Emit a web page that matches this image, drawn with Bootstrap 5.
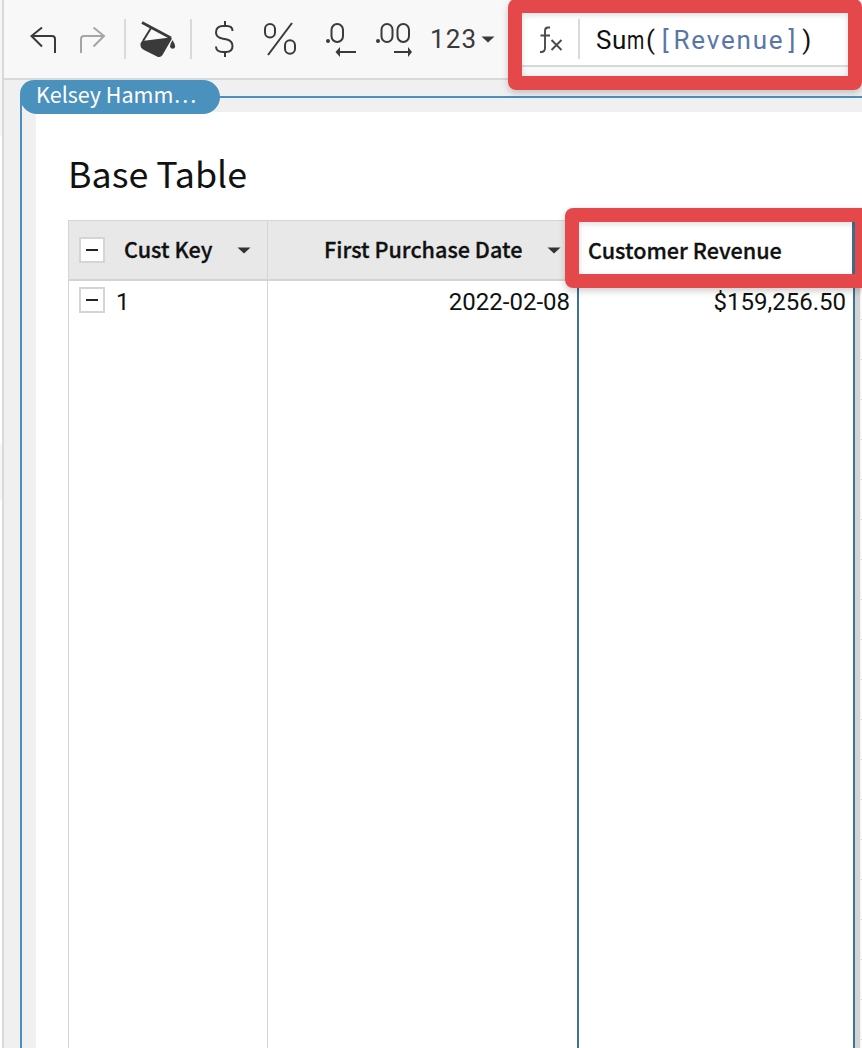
<!DOCTYPE html>
<html lang="en">
<head>
<meta charset="utf-8">
<meta name="viewport" content="width=device-width, initial-scale=1">
<title>Base Table</title>
<link href="https://cdn.jsdelivr.net/npm/bootstrap@5.3.0/dist/css/bootstrap.min.css" rel="stylesheet">
<style>
body{font-family:"Noto Sans CJK SC","Open Sans",sans-serif;color:#111;background:#fff;height:1048px;overflow:hidden}
.app{height:1048px;border-left:2px solid #d9d9d9;margin-left:2px;background:#f0f0f0}
.toolbar{height:80px;background:#f8f8f8;border-bottom:2px solid #d9d9d9}
.toolbar svg,.caret{display:block;flex:none}
.rule{width:2px;height:40px;background:#d9d9d9;flex:none}
.num{font:400 26px/30px Roboto,sans-serif;letter-spacing:1.2px;color:#3a3a3a}
.formula{width:327px;height:54px;margin-left:27px;margin-top:13px;align-self:flex-start;background:#fff;border-bottom:2px solid #d9d9d9}
.code{font:400 26px/30px Roboto,sans-serif;letter-spacing:1.8px;white-space:nowrap;padding-top:2px}
.code .fn{letter-spacing:.5px}
.code .m{display:inline-block;transform:scaleX(.76);transform-origin:0 50%;margin-right:-4px}
.code .ref{color:#5877a8;margin-left:5px}
.code .br{margin-right:3px}
.page{height:968px;padding-left:16px}
.selection{position:relative;height:952px;width:842px;margin-top:16px;border-top:2px solid #4b91bd;border-left:2px solid #4b91bd}
.owner{position:absolute;left:-2px;top:-18px;width:200px;height:34px;background:#4b91bd;color:#fff;border-radius:14px 17px 17px 17px;font-size:21.5px;line-height:28px;padding-left:16px;white-space:nowrap}
.sheet{margin:14px 0 0 14px;height:936px;background:#fff;padding:38px 0 0 32px}
.sheet h1{font-size:35.800px;font-weight:400;line-height:44px;height:70px;margin:0;white-space:nowrap}
.grid{width:794px;height:828px}
.c1{width:200px;border-left:1px solid #d5d5d5;border-right:1px solid #d5d5d5}
.c2{width:309px}
.c3{width:278px;border-left:2px solid #3b7295;border-right:2px solid #3b7295}
.hd{height:61px;background:#e8e8e8;border-top:1px solid #d5d5d5;border-bottom:2px solid #d3d3d3;font-size:21.600px;font-weight:500;-webkit-text-stroke:.3px #111;line-height:30px;white-space:nowrap}
.c3 .hd{background:#fff;border-right:1px solid #3b7295}
.cellrow{height:42px;font:400 24px/28px Roboto,sans-serif;white-space:nowrap}
.box{width:26px;height:26px;border:2px solid #d5d5d5;background:#fff;flex:none}
.box i{width:12px;height:2px;background:#222}
.next{width:7px;background:linear-gradient(90deg,#d3d3d3 5px,#f3f3f3 5px)}
.next div{height:40px;margin-left:6px;border-bottom:1px solid #d3d3d3;background:#fff}
.callout{position:absolute;border:14px solid #e5484b;border-radius:8px;box-shadow:0 3px 7px #0003,inset 0 2px 6px #0002}
.top-call{left:508px;top:-1px;width:354px;height:91px}
.head-call{left:565px;top:208px;width:304px;height:80px}
.edge{position:absolute;left:0;top:444px;width:2px;height:56px;background:#f6f6f6}
.edge.up{top:0;height:136px}
</style>
<script src="https://cdn.jsdelivr.net/npm/bootstrap@5.3.0/dist/js/bootstrap.bundle.min.js"></script>
</head>
<body class="position-relative">
<div class="edge up"></div><div class="edge"></div>
<div class="app">
  <div class="toolbar d-flex align-items-center">
    <svg style="margin-left:26px" width="28" height="28" viewBox="30 25 28 28" fill="none" stroke="#3a3a3a" stroke-width="2"><path d="M42 27.500 31.500 36 42 46.500M32 36H52Q55 36 55 39V53"/></svg>
    <svg style="margin-left:20px" width="28" height="28" viewBox="78 25 28 28" fill="none" stroke="#a5a5a5" stroke-width="2"><path d="M93.500 27.500 104 36 93.500 46.500M104 36H84Q81 36 81 39V53"/></svg>
    <div class="rule" style="margin-left:18px"></div>
    <svg style="margin-left:13px" width="38" height="38" viewBox="139 20 38 38" fill="#3a3a3a"><path d="M142 22.500 171 38" stroke="#3a3a3a" stroke-width="2.600" fill="none"/><path d="M151 28 143 41" stroke="#3a3a3a" stroke-width="2" fill="none"/><path d="M142 41 170 37.500 172 38.500 162.500 55Q160.500 58 157 56.500L144 50Q140 48 140.500 43.500Z"/><path d="M172.500 40Q177.500 48 173 48.800 167.500 48.500 172.500 40Z"/></svg>
    <div class="rule" style="margin-left:13px"></div>
    <svg style="margin-left:21px" width="24" height="38" viewBox="213 20 24 38" fill="none" stroke="#3a3a3a" stroke-width="2"><path d="M225 21V26M225 52V57M232.500 31Q232.500 26 227 26H223Q216 26 216 32.500 216 37.500 223 38.700L226 39.200Q232.500 40.500 232.500 46 232.500 52 226 52H223Q216 52 216 46.500"/></svg>
    <svg style="margin-left:26px" width="36" height="36" viewBox="263 21 36 36" fill="none" stroke="#3a3a3a" stroke-width="2"><rect x="265" y="24" width="10" height="13.500" rx="5"/><rect x="285" y="40.300" width="10" height="13.500" rx="5"/><path d="M292 23 268 55"/></svg>
    <svg style="margin-left:26px" width="32" height="36" viewBox="325 21 32 36" fill="none" stroke="#3a3a3a" stroke-width="2"><circle cx="328" cy="41" r="2" fill="#3a3a3a" stroke="none"/><rect x="331.500" y="24" width="11.500" height="18" rx="5.700"/><path d="M338 52H356"/><path d="M340 47V57L335.500 52Z" fill="#3a3a3a" stroke="none"/></svg>
    <svg style="margin-left:18px" width="40" height="36" viewBox="375 21 40 36" fill="none" stroke="#3a3a3a" stroke-width="2"><circle cx="378" cy="41" r="2" fill="#3a3a3a" stroke="none"/><rect x="381.500" y="24" width="11" height="18" rx="5.500"/><rect x="397.500" y="24" width="11.500" height="18" rx="5.700"/><path d="M394 52H409"/><path d="M408 47V57L412 52Z" fill="#3a3a3a" stroke="none"/></svg>
    <span class="num" style="margin-left:15px;width:51px">123</span>
    <svg width="14" height="7" viewBox="0 0 14 7"><path d="M.5.500H13.500L7 6.500Z" fill="#3a3a3a"/></svg>
    <div class="formula d-flex align-items-center">
      <svg style="margin-left:17px" width="26" height="30" viewBox="539 25 26 30" fill="none" stroke="#4a4a4a" stroke-width="1.900"><path d="M550 28.500H548Q545 28.500 545 32V49Q545 53 541 53H540M540.500 36.500H550M551.500 41 561.500 51M561.500 41 551.500 51"/></svg>
      <div class="rule" style="margin-left:13px"></div>
      <div class="code" style="margin-left:16px"><span class="fn">Su<span class="m">m</span></span><span class="par">(</span><span class="ref"><span class="br">[</span>Revenue<span style="margin-left:4px">]</span></span><span style="margin-left:5px">)</span></div>
    </div>
  </div>
  <div class="page d-flow-root overflow-hidden">
    <div class="selection">
      <div class="owner">Kelsey Hamm…</div>
      <div class="d-flex"><div class="sheet flex-grow-1">
        <h1>Base Table</h1>
        <div class="grid d-flex">
          <div class="c1">
            <div class="hd d-flex align-items-center"><span class="box d-flex align-items-center justify-content-center" style="margin-left:10px"><i></i></span><span style="margin-left:19px;margin-top:-3px;width:113px">Cust Key</span><svg class="caret" width="14" height="7" viewBox="0 0 14 7"><path d="M.5.500H13.500L7 6.500Z" fill="#333"/></svg></div>
            <div class="cellrow d-flex align-items-center"><span class="box d-flex align-items-center justify-content-center" style="margin-left:10px;margin-top:-4px"><i></i></span><span style="margin-left:11px">1</span></div>
          </div>
          <div class="c2">
            <div class="hd d-flex align-items-center"><span style="margin-left:56px;margin-top:-3px;width:223px">First Purchase Date</span><svg class="caret" width="14" height="7" viewBox="0 0 14 7"><path d="M.5.500H13.500L7 6.500Z" fill="#333"/></svg></div>
            <div class="cellrow d-flex align-items-center justify-content-end" style="padding-right:7px">2022-02-08</div>
          </div>
          <div class="c3">
            <div class="hd d-flex align-items-center" style="padding:0 0 1px 9px">Customer Revenue</div>
            <div class="cellrow d-flex align-items-center justify-content-end" style="padding-right:7px">$159,256.50</div>
          </div>
          <div class="next overflow-hidden">
            <div></div><div style="height:60px"></div><div></div><div></div><div></div><div></div><div></div><div></div><div></div><div></div><div></div><div></div><div></div><div></div><div></div><div></div><div></div><div></div><div></div><div></div><div></div>
          </div>
        </div>
      </div></div>
    </div>
  </div>
</div>
<div class="callout top-call"></div>
<div class="callout head-call"></div>
</body>
</html>
